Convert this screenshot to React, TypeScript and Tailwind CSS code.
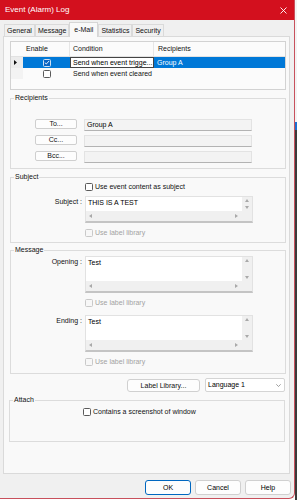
import clsx from "clsx";

const Tri = ({ dir }: { dir: "up" | "down" | "left" | "right" }) => {
    const paths = {
        up: "M0 3 L2 0 L4 3Z",
        down: "M0 0 L4 0 L2 3Z",
        left: "M3 0 L3 4 L0 2Z",
        right: "M0 0 L0 4 L3 2Z",
    };
    const vertical = dir === "up" || dir === "down";
    return (
        <svg width={vertical ? 4 : 3} height={vertical ? 3 : 4} viewBox={vertical ? "0 0 4 3" : "0 0 3 4"}>
            <path d={paths[dir]} fill="#a9a9a9" />
        </svg>
    );
};

const Checkbox = ({ checked, disabled, onBlue }: { checked?: boolean; disabled?: boolean; onBlue?: boolean }) => (
    <span
        className={clsx(
            "inline-flex w-[8px] h-[8px] rounded-[1.5px] border items-center justify-center shrink-0",
            disabled && "border-[#c9c9c9] bg-[#f7f7f7]",
            onBlue && "border-[#cfe0f3] bg-[#0a64c2]",
            !disabled && !onBlue && "border-[#5a5a5a] bg-white"
        )}
    >
        {checked && (
            <svg width="6" height="5" viewBox="0 0 6 5">
                <path d="M0.8 2.6 L2.3 4 L5.2 0.9" fill="none" stroke="white" strokeWidth="0.9" />
            </svg>
        )}
    </span>
);

const CheckRow = ({ label, disabled }: { label: string; disabled?: boolean }) => (
    <div className="flex items-center h-[8px] gap-[2px]">
        <Checkbox disabled={disabled} />
        <span className={disabled ? "text-[#a3a3a3]" : "text-[#111]"}>{label}</span>
    </div>
);

const ScrollBox = ({ text, h }: { text: string; h: string }) => (
    <div className={clsx("w-[168px] flex flex-col border border-[#e2e2e2] border-b-2 border-b-[#c4c4c4] bg-[#f0f0f0]", h)}>
        <div className="flex flex-1 min-h-0">
            <div className="flex-1 bg-white pl-[2px] pt-[2px] text-black">{text}</div>
            <div className="w-[10px] flex flex-col items-center justify-between py-[2px]">
                <Tri dir="up" />
                <Tri dir="down" />
            </div>
        </div>
        <div className="h-[10px] flex items-center">
            <div className="flex-1 flex items-center justify-between pl-[3px] pr-[4px]">
                <Tri dir="left" />
                <Tri dir="right" />
            </div>
            <div className="w-[10px]" />
        </div>
    </div>
);

const Group = ({ title, className, children }: { title: string; className: string; children: React.ReactNode }) => (
    <div className={clsx("relative border border-[#dcdcdc] shrink-0", className)}>
        <span className="absolute -top-[5px] left-[3px] px-[1px] bg-[#f9f9f9] leading-[8px] text-[#111]">{title}</span>
        {children}
    </div>
);

const RecipientRow = ({ label, value }: { label: string; value?: string }) => (
    <div className="flex items-start h-[16px]">
        <button className="ml-[24px] w-[42px] h-[10px] border border-[#cfcfcf] rounded-[2px] bg-[#fdfdfd] leading-[8px] text-[#111]">
            {label}
        </button>
        <div className="ml-[7px] w-[168px] h-[12px] bg-[#f3f3f3] border border-[#e3e3e3] border-b-[#b3b3b3] pl-[2px] flex items-center text-black">
            {value}
        </div>
    </div>
);

const tabs = ["General", "Message", "e-Mail", "Statistics", "Security"];

const App = () => {
    return (
        <div className="w-[297px] h-[500px] bg-white flex overflow-hidden font-['Liberation_Sans',Arial,sans-serif] text-[7px] leading-[8px]">
            <div className="w-[295px] h-[499px] bg-[#f0f0f0] border-r border-b border-[#c8505c] rounded-br-[6px] flex flex-col">
                {/* title bar */}
                <div className="h-[20px] bg-[#d3101e] flex items-center justify-between pl-[5px] pr-[7px] shrink-0">
                    <span className="text-white text-[8px]">Event (Alarm) Log</span>
                    <svg width="7" height="7" viewBox="0 0 7 7">
                        <path d="M0.5 0.5 L6.5 6.5 M6.5 0.5 L0.5 6.5" stroke="white" strokeWidth="0.9" />
                    </svg>
                </div>

                {/* tabs */}
                <div className="flex items-end ml-[4px] mt-[2px] h-[15px] relative z-10 shrink-0">
                    {tabs.map((t) =>
                        t === "e-Mail" ? (
                            <div key={t} className="h-[15px] px-[4px] bg-[#f9f9f9] border border-b-0 border-[#d6d6d6] flex items-center text-[#111]">
                                {t}
                            </div>
                        ) : (
                            <div key={t} className="h-[12px] mb-[1px] px-[2px] bg-[#f0f0f0] border border-b-0 border-[#dadada] flex items-center text-[#111]">
                                {t}
                            </div>
                        )
                    )}
                </div>

                {/* panel */}
                <div className="ml-[3px] -mt-px w-[287px] h-[438px] bg-[#f9f9f9] border border-[#dadada] flex flex-col shrink-0">
                    {/* grid */}
                    <div className="ml-[6px] mt-[4px] w-[276px] h-[49px] border border-[#d2d2d2] bg-[#fbfbfb] flex flex-col shrink-0">
                        <div className="flex h-[15px] border-b border-[#e2e2e2] text-[#111]">
                            <div className="w-[12px]" />
                            <div className="w-[47px] pl-[3px] flex items-center border-r border-[#e6e6e6]">Enable</div>
                            <div className="w-[84px] pl-[3px] flex items-center border-r border-[#e6e6e6]">Condition</div>
                            <div className="flex-1 pl-[4px] flex items-center">Recipients</div>
                        </div>
                        <div className="flex h-[11px]">
                            <div className="w-[12px] bg-[#ececec] flex items-center pl-[3px]">
                                <svg width="3" height="5" viewBox="0 0 3 5">
                                    <path d="M0 0 L3 2.5 L0 5Z" fill="#111" />
                                </svg>
                            </div>
                            <div className="flex-1 bg-[#0078d7] flex">
                                <div className="w-[47px] flex items-center justify-center">
                                    <Checkbox checked onBlue />
                                </div>
                                <div className="w-[84px] bg-white border border-[#444] pl-[2px] flex items-center text-black whitespace-nowrap overflow-hidden">
                                    Send when event trigge...
                                </div>
                                <div className="flex-1 pl-[3px] flex items-center text-white">Group A</div>
                            </div>
                        </div>
                        <div className="flex h-[11px] text-[#111]">
                            <div className="w-[12px] bg-[#f3f3f3]" />
                            <div className="w-[47px] flex items-center justify-center">
                                <Checkbox />
                            </div>
                            <div className="w-[84px] pl-[3px] flex items-center whitespace-nowrap">Send when event cleared</div>
                        </div>
                    </div>

                    {/* Recipients */}
                    <Group title="Recipients" className="ml-[6px] mt-[8px] w-[276px] h-[71px] pt-[20px]">
                        <RecipientRow label="To..." value="Group A" />
                        <RecipientRow label="Cc..." />
                        <RecipientRow label="Bcc..." />
                    </Group>

                    {/* Subject */}
                    <Group title="Subject" className="ml-[6px] mt-[8px] w-[276px] h-[66px] pt-[5px] pl-[74px]">
                        <CheckRow label="Use event content as subject" />
                        <div className="flex mt-[5px] -ml-[73px]">
                            <div className="w-[73px] pr-[3px] pt-[2px] text-right text-[#111]">Subject :</div>
                            <ScrollBox text="THIS IS A TEST" h="h-[27px]" />
                        </div>
                        <div className="mt-[6px]">
                            <CheckRow label="Use label library" disabled />
                        </div>
                    </Group>

                    {/* Message */}
                    <Group title="Message" className="ml-[6px] mt-[7px] w-[276px] h-[124px] pt-[5px] pl-[74px]">
                        <div className="flex -ml-[73px]">
                            <div className="w-[73px] pr-[3px] pt-[2px] text-right text-[#111]">Opening :</div>
                            <ScrollBox text="Test" h="h-[37px]" />
                        </div>
                        <div className="mt-[6px]">
                            <CheckRow label="Use label library" disabled />
                        </div>
                        <div className="flex mt-[8px] -ml-[73px]">
                            <div className="w-[73px] pr-[3px] pt-[2px] text-right text-[#111]">Ending :</div>
                            <ScrollBox text="Test" h="h-[37px]" />
                        </div>
                        <div className="mt-[6px]">
                            <CheckRow label="Use label library" disabled />
                        </div>
                    </Group>

                    {/* label library + language */}
                    <div className="flex items-start mt-[4px] h-[14px] shrink-0">
                        <button className="ml-[123px] mt-[1px] w-[73px] h-[13px] border border-[#d0d0d0] rounded-[3px] bg-[#fdfdfd] text-[#111]">
                            Label Library...
                        </button>
                        <div className="ml-[5px] w-[80px] h-[14px] border border-[#d4d4d4] rounded-[2px] bg-white flex items-center justify-between pl-[2px] pr-[3px] text-black">
                            <span>Language 1</span>
                            <svg width="5" height="3" viewBox="0 0 5 3">
                                <path d="M0.3 0.3 L2.5 2.5 L4.7 0.3" fill="none" stroke="#777" strokeWidth="0.7" />
                            </svg>
                        </div>
                    </div>

                    {/* Attach */}
                    <Group title="Attach" className="ml-[5px] mt-[8px] w-[276px] h-[42px] pt-[7px] pl-[73px]">
                        <CheckRow label="Contains a screenshot of window" />
                    </Group>
                </div>

                {/* dialog buttons */}
                <div className="flex justify-end gap-[4px] pr-[3px] mt-[6px]">
                    <button className="w-[46px] h-[15px] border-[1.5px] border-[#0067c0] rounded-[3px] bg-[#fdfdfd] text-black">OK</button>
                    <button className="w-[46px] h-[15px] border border-[#d0d0d0] rounded-[3px] bg-[#fdfdfd] text-black">Cancel</button>
                    <button className="w-[46px] h-[15px] border border-[#d0d0d0] rounded-[3px] bg-[#fdfdfd] text-black">Help</button>
                </div>
            </div>

            {/* whatever is behind the window */}
            <div className="w-[2px] h-[500px] flex flex-col">
                <div className="h-[122px] bg-[#f3f3f3]" />
                <div className="h-[8px] bg-[#1a6fd0]" />
                <div className="flex-1 bg-[#3a3a3a]" />
            </div>
        </div>
    );
};

export default App;
